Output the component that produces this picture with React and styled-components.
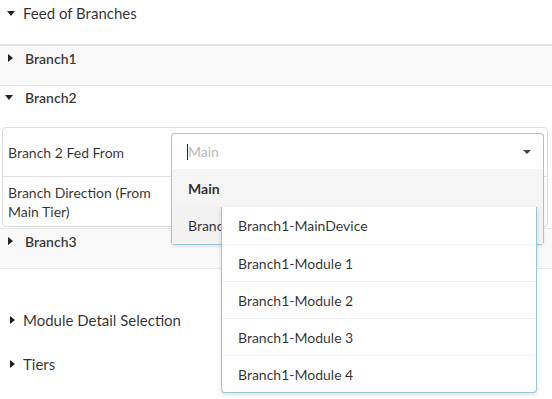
import React from 'react';
import styled, { createGlobalStyle } from 'styled-components';

const GlobalStyle = createGlobalStyle`
  body {
    margin: 0;
    background: #fff;
    font-family: Lato, "Open Sans", sans-serif;
    color: rgba(0, 0, 0, 0.87);
  }
`;

const Page = styled.div`
  width: 552px;
  height: 399px;
  overflow: hidden;
`;

const Caret = styled.span`
  display: inline-block;
  width: 0;
  height: 0;
  ${({ open }) =>
    open
      ? `
    border-left: 4px solid transparent;
    border-right: 4px solid transparent;
    border-top: 5px solid #222;
  `
      : `
    border-top: 4px solid transparent;
    border-bottom: 4px solid transparent;
    border-left: 5px solid #222;
    margin-left: 2px;
  `}
`;

const CaretSlot = styled.span`
  width: 14px;
  display: flex;
  justify-content: center;
`;

const SectionTitle = styled.div`
  display: flex;
  align-items: center;
  gap: 5px;
  height: 18px;
  padding: ${({ pad }) => pad || '4px 0 0 4px'};
  font-size: 15px;
  color: rgba(0, 0, 0, 0.82);
`;

const BranchList = styled.div`
  margin-top: 22px;
  border-top: 2px solid #e2e2e2;
`;

const BranchRow = styled.div`
  background: ${({ shaded }) => (shaded ? '#f9f9f9' : '#fff')};
  border-bottom: ${({ noLine }) => (noLine ? 'none' : '1px solid #e6e6e6')};
  border-top: ${({ topLine }) => (topLine ? '1px solid #e6e6e6' : 'none')};
  padding: ${({ pad }) => pad || '3px 0 18px 0'};
`;

const BranchTitle = styled.div`
  display: flex;
  align-items: center;
  gap: 9px;
  height: 18px;
  padding-left: 2px;
  font-size: 14px;
  font-weight: 600;
  color: rgba(0, 0, 0, 0.8);
`;

const Table = styled.div`
  margin: 21px 4px 1px 2px;
  border: 1px solid #dcdcdc;
  border-radius: 4px;
  display: grid;
  grid-template-columns: 168px 1fr;
  font-size: 14px;
`;

const Label = styled.div`
  padding: 0 0 0 5px;
  display: flex;
  align-items: center;
  line-height: 19px;
  color: rgba(0, 0, 0, 0.82);
  border-top: ${({ first }) => (first ? 'none' : '1px solid #e2e2e2')};
  height: ${({ h }) => h}px;
`;

const Cell = styled.div`
  padding: ${({ pad }) => pad || '0'};
  border-top: ${({ first }) => (first ? 'none' : '1px solid #e2e2e2')};
  position: relative;
`;

const Select = styled.div`
  position: relative;
  height: 35px;
  border: 1px solid #96c8da;
  border-bottom-color: #f5f5f5;
  border-radius: 4px 4px 0 0;
  display: flex;
  align-items: center;
  padding-left: 15px;
  font-size: 14px;
  color: #b8b8b8;
  background: #fff;
  z-index: 3;
`;

const TextCursor = styled.span`
  width: 1px;
  height: 16px;
  background: #222;
`;

const Arrow = styled.span`
  position: absolute;
  right: 12px;
  top: 16px;
  border-left: 4px solid transparent;
  border-right: 4px solid transparent;
  border-top: 4px solid #444;
`;

const Menu = styled.div`
  position: absolute;
  left: 0;
  right: 3px;
  top: 42px;
  border: 1px solid #96c8da;
  border-top: none;
  border-radius: 0 0 4px 4px;
  background: #fff;
  box-shadow: 0 2px 3px rgba(0, 0, 0, 0.08);
  z-index: 3;
`;

const MenuItem = styled.div`
  position: relative;
  height: 37px;
  padding-left: 16px;
  display: flex;
  align-items: center;
  font-size: 14px;
  font-weight: ${({ selected }) => (selected ? 700 : 400)};
  background: ${({ selected, hover }) => (selected ? '#f5f5f5' : hover ? '#f2f2f2' : '#fff')};
  color: rgba(0, 0, 0, 0.82);
  white-space: nowrap;
`;

const SubMenu = styled.div`
  position: absolute;
  top: 0;
  left: 49px;
  width: 314px;
  border: 1px solid #96c8da;
  border-top: none;
  border-radius: 0 0 4px 4px;
  background: #fff;
  box-shadow: 0 2px 4px rgba(0, 0, 0, 0.12);
  z-index: 5;
`;

const SubItem = styled.div`
  height: 37px;
  padding-left: 16px;
  display: flex;
  align-items: center;
  font-size: 14px;
  color: rgba(0, 0, 0, 0.82);
  border-top: ${({ first }) => (first ? 'none' : '1px solid #f3f3f3')};
  box-sizing: border-box;
`;

const subItems = [
  'Branch1-MainDevice',
  'Branch1-Module 1',
  'Branch1-Module 2',
  'Branch1-Module 3',
  'Branch1-Module 4',
];

export default function App() {
  return (
    <Page>
      <GlobalStyle />
      <SectionTitle>
        <CaretSlot><Caret open /></CaretSlot>
        Feed of Branches
      </SectionTitle>

      <BranchList>
        <BranchRow shaded>
          <BranchTitle>
            <CaretSlot><Caret /></CaretSlot>
            Branch1
          </BranchTitle>
        </BranchRow>

        <BranchRow noLine pad="2px 0 0 0">
          <BranchTitle>
            <CaretSlot><Caret open /></CaretSlot>
            Branch2
          </BranchTitle>
          <Table>
            <Label first h={48}>Branch 2 Fed From</Label>
            <Cell first pad="5px 3px 6px 0">
              <Select>
                <TextCursor />
                Main
                <Arrow />
              </Select>
              <Menu>
                <MenuItem selected>Main</MenuItem>
                <MenuItem hover>
                  Branch1
                  <SubMenu>
                    {subItems.map((s, i) => (
                      <SubItem key={s} first={i === 0}>{s}</SubItem>
                    ))}
                  </SubMenu>
                </MenuItem>
              </Menu>
            </Cell>
            <Label h={49}>Branch Direction (From<br />Main Tier)</Label>
            <Cell />
          </Table>
        </BranchRow>

        <BranchRow shaded topLine>
          <BranchTitle>
            <CaretSlot><Caret /></CaretSlot>
            Branch3
          </BranchTitle>
        </BranchRow>
      </BranchList>

      <SectionTitle pad="42px 0 0 4px">
        <CaretSlot><Caret /></CaretSlot>
        Module Detail Selection
      </SectionTitle>
      <SectionTitle pad="26px 0 0 4px">
        <CaretSlot><Caret /></CaretSlot>
        Tiers
      </SectionTitle>
    </Page>
  );
}
